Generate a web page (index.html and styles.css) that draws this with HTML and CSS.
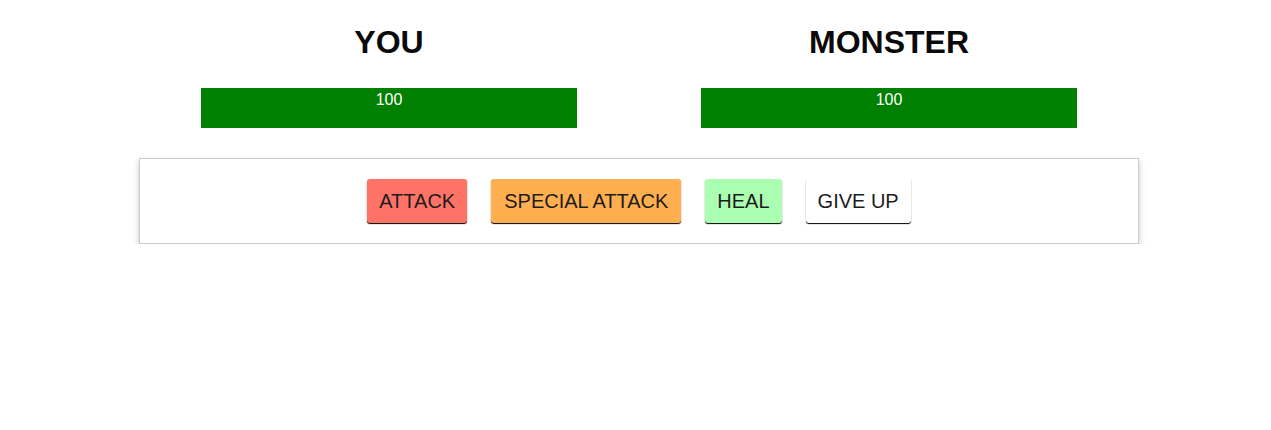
FILE: index.html
```html
<!DOCTYPE html>
<html lang="en">
<head>
<meta charset="utf-8">
<title>Monster Slayer</title>
<link rel="stylesheet" href="styles.css">
</head>
<body>
<div class="app">
  <section class="fighters">
    <div class="fighter">
      <h1 class="fighter-name">YOU</h1>
      <div class="healthbar"><div class="health" style="width: 100%">100</div></div>
    </div>
    <div class="fighter">
      <h1 class="fighter-name">MONSTER</h1>
      <div class="healthbar"><div class="health" style="width: 100%">100</div></div>
    </div>
  </section>
  <section class="controls">
    <button class="btn btn-attack">ATTACK</button>
    <button class="btn btn-special">SPECIAL ATTACK</button>
    <button class="btn btn-heal">HEAL</button>
    <button class="btn btn-giveup">GIVE UP</button>
  </section>
</div>
</body>
</html>
```

FILE: styles.css
```css
html, body {
  background: #ffffff;
}
body {
  margin: 0;
  padding: 0 0 0 7px;
  font-family: "Liberation Sans", Arial, sans-serif;
  font-size: 16px;
  color: #111;
}
.app {
  width: 1000px;
  margin: 0 auto;
  padding-top: 24px;
}
.fighters {
  display: grid;
  grid-template-columns: 500px 500px;
}
.fighter {
  padding: 0 15px;
}
.fighter-name {
  margin: 0 0 28px;
  font-size: 32px;
  line-height: 36px;
  font-weight: bold;
  text-align: center;
  color: #0a0a0a;
}
.healthbar {
  width: 80%;
  height: 40px;
  margin: 0 auto;
  background: #eee;
}
.health {
  height: 40px;
  background: #008000;
  color: #fff;
  text-align: center;
  font-size: 16px;
  line-height: 24px;
}
.controls {
  margin-top: 30px;
  border: 1px solid #ccc;
  box-shadow: 0 3px 6px #c4c4c4;
  padding: 20px;
  display: flex;
  justify-content: center;
  gap: 24px;
}
.btn {
  font-family: "Liberation Sans", Arial, sans-serif;
  font-size: 20px;
  line-height: 24px;
  padding: 10px 12px;
  border: 0;
  border-radius: 3px;
  box-shadow: 0 1px 1px #000;
  color: #1c1c1c;
  cursor: pointer;
}
.btn-special { padding: 10px 13px; }
.btn-attack { background: #ff7367; }
.btn-special { background: #ffaf4f; }
.btn-heal { background: #aaffb0; }
.btn-giveup { background: #ffffff; }
```
